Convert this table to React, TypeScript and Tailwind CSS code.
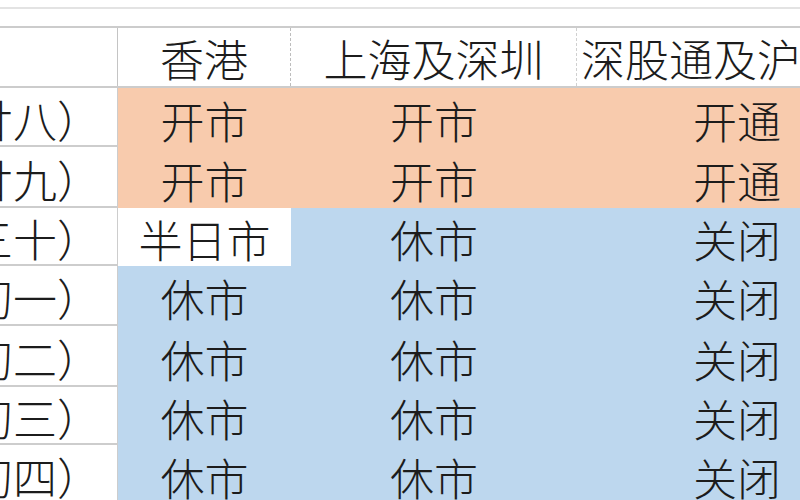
import React from "react";

const font = { fontFamily: '"Noto Sans CJK SC", "Noto Sans", sans-serif' };

type Row = { label: string; h: number; c2: string; c3: string; c4: string; kind: "orange" | "half" | "blue" };

const rows: Row[] = [
  { label: "（年廿八）", h: 59, c2: "开市", c3: "开市", c4: "开通", kind: "orange" },
  { label: "（年廿九）", h: 61, c2: "开市", c3: "开市", c4: "开通", kind: "orange" },
  { label: "（年三十）", h: 58, c2: "半日市", c3: "休市", c4: "关闭", kind: "half" },
  { label: "（初一）", h: 60, c2: "休市", c3: "休市", c4: "关闭", kind: "blue" },
  { label: "（初二）", h: 61, c2: "休市", c3: "休市", c4: "关闭", kind: "blue" },
  { label: "（初三）", h: 58, c2: "休市", c3: "休市", c4: "关闭", kind: "blue" },
  { label: "（初四）", h: 60, c2: "休市", c3: "休市", c4: "关闭", kind: "blue" },
];

export default function App() {
  return (
    <div className="w-[800px] h-[500px] overflow-hidden bg-white text-[#1c1c1c] font-light" style={font}>
      <div className="h-[26px] pt-[7px]">
        <div className="h-[2px] bg-[#e3e3e3]" />
      </div>
      <div className="w-[897px]">
        <div className="grid grid-cols-[118px_173px_286px_320px] h-[62px] border-t-2 border-b-2 border-[#cccccc]">
          <div className="border-r border-[#c4c4c4]" />
          <div className="border-r border-dashed border-[#bdbdbd] flex items-center justify-center text-[44px] leading-none whitespace-nowrap pt-[2px]">
            香港
          </div>
          <div className="border-r border-dashed border-[#d0d0d0] flex items-center justify-center text-[44px] leading-none whitespace-nowrap pt-[2px]">
            上海及深圳
          </div>
          <div className="flex items-center justify-center text-[44px] leading-none whitespace-nowrap pt-[2px] pr-[4px]">
            深股通及沪股通
          </div>
        </div>
        {rows.map((r, i) => {
          const bg2 = r.kind === "orange" ? "bg-[#f8cbad]" : r.kind === "half" ? "bg-white" : "bg-[#bdd7ee]";
          const bg34 = r.kind === "orange" ? "bg-[#f8cbad]" : "bg-[#bdd7ee]";
          return (
            <div
              key={i}
              className="grid grid-cols-[118px_173px_286px_320px]"
              style={{ height: r.h }}
            >
              <div className="border-b-2 border-r border-[#cdcdcd] flex items-center justify-end pr-[16px] overflow-hidden text-[44px] leading-none whitespace-nowrap pt-[4px]">
                {r.label}
              </div>
              <div className={`${bg2} flex items-center justify-center text-[44px] leading-none whitespace-nowrap pt-[4px]`}>
                {r.c2}
              </div>
              <div className={`${bg34} flex items-center justify-center text-[44px] leading-none whitespace-nowrap pt-[4px]`}>
                {r.c3}
              </div>
              <div className={`${bg34} flex items-center justify-center text-[44px] leading-none whitespace-nowrap pt-[4px]`}>
                {r.c4}
              </div>
            </div>
          );
        })}
      </div>
    </div>
  );
}
